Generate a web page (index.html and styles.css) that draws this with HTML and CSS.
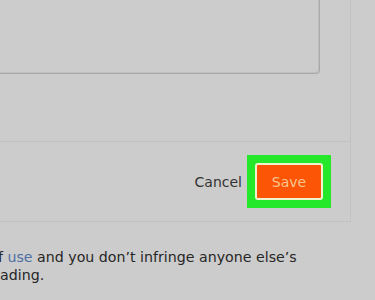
FILE: index.html
```html
<!DOCTYPE html>
<html lang="en">
<head>
  <meta charset="UTF-8">
  <title>Edit description</title>
  <link rel="stylesheet" href="styles.css">
</head>
<body>
  <div class="card">
    <div class="card-body">
      <div class="editor"></div>
    </div>
    <div class="card-footer">
      <button class="cancel-button">Cancel</button>
      <div class="highlight">
        <button class="save-button">Save</button>
      </div>
    </div>
  </div>

  <p class="notice">with our terms of <a href="#">use</a> and you don’t infringe anyone else’s<br>rights before uploading.</p>
</body>
</html>
```

FILE: styles.css
```css
body {
  margin: 0;
  width: 375px;
  height: 300px;
  overflow: hidden;
  background: #cccccc;
  font-family: "DejaVu Sans", Verdana, sans-serif;
  color: #2b2b2b;
}

.card {
  margin-left: -200px;
  width: 550px;
  border-right: 1px solid #c2c2c2;
  border-bottom: 1px solid #c2c2c2;
}

.card-body {
  padding: 0 30px 67px 0;
}

.editor {
  box-sizing: border-box;
  height: 74px;
  border: 1px solid #a9a9a9;
  border-top: none;
  border-radius: 0 0 4px 0;
  box-shadow: inset -1px -1px 0 #bdbdbd;
}

.card-footer {
  height: 79px;
  border-top: 1px solid #c2c2c2;
  display: flex;
  justify-content: flex-end;
  align-items: center;
  gap: 5px;
  padding-right: 19px;
}

.cancel-button {
  background: none;
  border: none;
  padding: 0;
  font: inherit;
  font-size: 14px;
  color: #333;
}

.highlight {
  background: #26e82b;
  padding: 8px;
}

.save-button {
  display: block;
  box-sizing: border-box;
  width: 68px;
  height: 37px;
  background: #fb5505;
  border: 2px solid #eef4cc;
  border-radius: 3px;
  font: inherit;
  font-size: 14px;
  color: #f9c58f;
}

.notice {
  margin: 26px 0 0 -126px;
  text-indent: 7px;
  font-size: 14.2px;
  line-height: 18px;
  white-space: nowrap;
  color: #262626;
}

.notice a {
  color: #4f6fa3;
  text-decoration: none;
}
```
